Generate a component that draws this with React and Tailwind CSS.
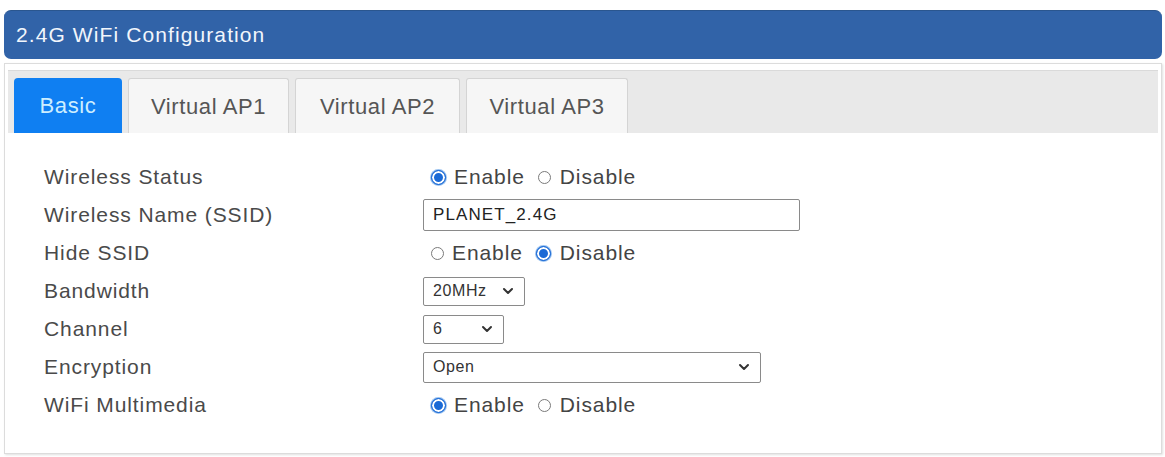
import React from 'react';

const font = { fontFamily: '"Liberation Sans", Arial, sans-serif' };

function Radio({ checked }) {
  if (checked) {
    return (
      <span className="inline-block w-[15px] h-[15px] rounded-full border border-[#1b6ad6] bg-[#1b6ad6] shadow-[inset_0_0_0_2px_#fff,0_0_0_1px_#9cc3f0]" />
    );
  }
  return <span className="inline-block w-[13px] h-[13px] rounded-full border border-[#7a7a7a] bg-white" />;
}

function RadioPair({ value }) {
  return (
    <div className="flex items-center text-[21px] tracking-[0.9px] text-[#444]">
      <span className="ml-[8px] flex items-center">
        <Radio checked={value === 'enable'} />
      </span>
      <span className="ml-[8px]">Enable</span>
      <span className="ml-[13px] flex items-center">
        <Radio checked={value === 'disable'} />
      </span>
      <span className="ml-[9px]">Disable</span>
    </div>
  );
}

function Chevron() {
  return (
    <svg width="12" height="8" viewBox="0 0 12 8" className="shrink-0">
      <path d="M2 2 L6 6 L10 2" fill="none" stroke="#333" strokeWidth="2" strokeLinecap="round" strokeLinejoin="round" />
    </svg>
  );
}

function Select({ value, width, height }) {
  return (
    <div
      className="flex items-center justify-between border border-[#8a8a8a] rounded-[2px] bg-white pl-[9px] pr-[10px] text-[16px] tracking-[0.6px] text-[#333]"
      style={{ width, height }}
    >
      <span>{value}</span>
      <Chevron />
    </div>
  );
}

const tabs = [
  { label: 'Basic', w: 'w-[108px]', active: true },
  { label: 'Virtual AP1', w: 'w-[161px]' },
  { label: 'Virtual AP2', w: 'w-[165px]' },
  { label: 'Virtual AP3', w: 'w-[162px]' },
];

const rows = [
  { label: 'Wireless Status', control: <RadioPair value="enable" /> },
  {
    label: 'Wireless Name (SSID)',
    control: (
      <div className="w-[377px] h-[32px] border border-[#8a8a8a] rounded-[2px] flex items-center pl-[9px] text-[17px] tracking-[1.1px] text-[#222]">
        PLANET_2.4G
      </div>
    ),
  },
  { label: 'Hide SSID', control: <RadioPair value="disable" /> },
  { label: 'Bandwidth', control: <Select value="20MHz" width={102} height={29} /> },
  { label: 'Channel', control: <Select value="6" width={81} height={29} /> },
  { label: 'Encryption', control: <Select value="Open" width={338} height={31} /> },
  { label: 'WiFi Multimedia', control: <RadioPair value="enable" /> },
];

export default function App() {
  return (
    <div className="w-[1165px] h-[457px] bg-white pt-[10px] px-[4px]" style={font}>
      {/* title bar */}
      <div className="h-[49px] w-[1158px] rounded-[7px] bg-[#3163a8] border-t border-[#2a568f] flex items-center pl-[12px] text-[21px] tracking-[1.1px] text-[#f2f6fc]">
        2.4G WiFi Configuration
      </div>

      {/* panel */}
      <div className="mt-[4px] w-[1158px] h-[391px] border border-[#dcdcdc] shadow-[1px_1px_2px_rgba(0,0,0,0.12)] px-[3px] pt-[6px]">
        <div className="h-[63px] bg-[#e9e9e9] border-t border-[#dadada] flex items-end pl-[6px] gap-[6px]">
          {tabs.map((t) =>
            t.active ? (
              <div
                key={t.label}
                className={`${t.w} h-[55px] rounded-t-[4px] bg-[#0f7ff2] flex items-center justify-center text-[22px] tracking-[0.6px] text-[#cdeeff]`}
              >
                {t.label}
              </div>
            ) : (
              <div
                key={t.label}
                className={`${t.w} h-[55px] rounded-t-[3px] bg-[#f6f6f6] border-x border-t border-[#d4d4d4] flex items-center justify-center text-[22px] tracking-[0.6px] text-[#555]`}
              >
                {t.label}
              </div>
            )
          )}
        </div>

        <div className="pt-[25px] pl-[36px]">
          {rows.map((r) => (
            <div key={r.label} className="h-[38px] flex items-center">
              <div className="w-[379px] text-[21px] tracking-[0.9px] text-[#4a4a4a]">{r.label}</div>
              {r.control}
            </div>
          ))}
        </div>
      </div>
    </div>
  );
}
